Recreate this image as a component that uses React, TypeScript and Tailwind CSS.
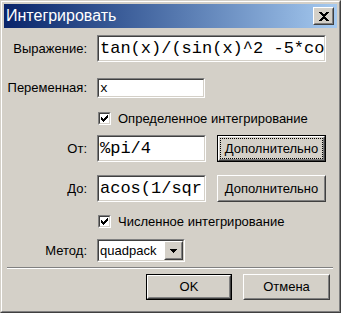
import React from 'react';

const sans = { fontFamily: '"Liberation Sans", Arial, sans-serif' };

function Sunken({ className = '', children }: { className?: string; children?: React.ReactNode }) {
  return (
    <div className={`border border-t-[#808080] border-l-[#808080] border-r-white border-b-white ${className}`}>
      <div className="h-full w-full border border-t-[#404040] border-l-[#404040] border-r-[#d4d0c8] border-b-[#d4d0c8] bg-white overflow-hidden flex items-center">
        {children}
      </div>
    </div>
  );
}

function Button({
  label,
  className = '',
  isDefault = false,
  focused = false,
}: {
  label: string;
  className?: string;
  isDefault?: boolean;
  focused?: boolean;
}) {
  if (isDefault) {
    return (
      <div className={`border border-black ${className}`}>
        <div className="h-full border border-t-white border-l-white border-r-[#404040] border-b-[#404040]">
          <div className="h-full border border-t-[#d4d0c8] border-l-[#d4d0c8] border-r-[#808080] border-b-[#808080] flex items-center justify-center">
            {focused ? (
              <div className="h-full w-full border border-dotted border-black flex items-center justify-center">
                {label}
              </div>
            ) : (
              label
            )}
          </div>
        </div>
      </div>
    );
  }
  return (
    <div className={`border border-t-white border-l-white border-r-[#404040] border-b-[#404040] ${className}`}>
      <div className="h-full border border-t-[#d4d0c8] border-l-[#d4d0c8] border-r-[#808080] border-b-[#808080] flex items-center justify-center">
        {label}
      </div>
    </div>
  );
}

function Checkbox({ label }: { label: string }) {
  // classic 7x7 check mark
  const px = [
    [6, 0],
    [5, 1], [6, 1],
    [0, 2], [4, 2], [5, 2], [6, 2],
    [0, 3], [1, 3], [3, 3], [4, 3], [5, 3],
    [0, 4], [1, 4], [2, 4], [3, 4], [4, 4],
    [1, 5], [2, 5], [3, 5],
    [2, 6],
  ];
  return (
    <div className="flex items-center ml-[94px] h-[13px]">
      <Sunken className="w-[13px] h-[13px]">
        <svg width="9" height="9" viewBox="0 0 9 9" shapeRendering="crispEdges">
          {px.map(([x, y], i) => (
            <rect key={i} x={x + 1} y={y + 1} width="1" height="1" fill="#000" />
          ))}
        </svg>
      </Sunken>
      <span className="ml-[7px] leading-none">{label}</span>
    </div>
  );
}

function Label({ text }: { text: string }) {
  return <div className="w-[83px] text-right shrink-0">{text}</div>;
}

export default function App() {
  const mono = { fontFamily: '"Liberation Mono", "Courier New", monospace' };

  return (
    <div
      className="w-[341px] h-[313px] bg-[#d4d0c8] border border-t-[#d4d0c8] border-l-[#d4d0c8] border-r-[#404040] border-b-[#404040] text-[13px] text-black"
      style={sans}
    >
      <div className="h-full border border-t-white border-l-white border-r-[#808080] border-b-[#808080] p-[2px] flex flex-col">
        {/* title bar */}
        <div className="h-[24px] shrink-0 bg-gradient-to-r from-[#0a246a] to-[#a6caf0] flex items-center pl-[2px] pr-[3px]">
          <span className="text-white text-[16px] leading-none flex-1">Интегрировать</span>
          <div className="w-[21px] h-[18px] border border-t-white border-l-white border-r-[#404040] border-b-[#404040] bg-[#d4d0c8]">
            <div className="h-full border border-t-[#d4d0c8] border-l-[#d4d0c8] border-r-[#808080] border-b-[#808080] flex items-center justify-center">
              <svg width="10" height="9" viewBox="0 0 10 9" shapeRendering="crispEdges">
                <path d="M0 0h2.5l2.5 3 2.5-3h2.5l-3.8 4.5 3.8 4.5h-2.5l-2.5-3-2.5 3h-2.5l3.8-4.5z" fill="#000" />
              </svg>
            </div>
          </div>
        </div>

        {/* body */}
        <div className="flex-1 flex flex-col">
          <div className="flex items-center mt-[7px]">
            <Label text="Выражение:" />
            <Sunken className="ml-[10px] w-[229px] h-[27px]">
              <span className="pl-[1px] whitespace-nowrap text-[17px] leading-none" style={mono}>
                tan(x)/(sin(x)^2 -5*co
              </span>
            </Sunken>
          </div>

          <div className="flex items-center mt-[16px]">
            <Label text="Переменная:" />
            <Sunken className="ml-[10px] w-[108px] h-[20px]">
              <span className="pl-[1px] text-[13px] leading-none" style={mono}>
                x
              </span>
            </Sunken>
          </div>

          <div className="mt-[14px]">
            <Checkbox label="Определенное интегрирование" />
          </div>

          <div className="flex items-center mt-[10px]">
            <Label text="От:" />
            <Sunken className="ml-[10px] w-[109px] h-[27px]">
              <span className="pl-[1px] whitespace-nowrap text-[17px] leading-none" style={mono}>
                %pi/4
              </span>
            </Sunken>
            <Button label="Дополнительно" className="ml-[11px] w-[109px] h-[27px]" isDefault focused />
          </div>

          <div className="flex items-center mt-[13px]">
            <Label text="До:" />
            <Sunken className="ml-[10px] w-[109px] h-[27px]">
              <span className="pl-[1px] whitespace-nowrap text-[17px] leading-none" style={mono}>
                acos(1/sqr
              </span>
            </Sunken>
            <Button label="Дополнительно" className="ml-[11px] w-[109px] h-[27px]" />
          </div>

          <div className="mt-[13px]">
            <Checkbox label="Численное интегрирование" />
          </div>

          <div className="flex items-center mt-[11px]">
            <Label text="Метод:" />
            <Sunken className="ml-[10px] w-[88px] h-[23px]">
              <span className="pl-[1px] flex-1 leading-none">quadpack</span>
              <div className="w-[19px] h-full border border-t-white border-l-white border-r-[#404040] border-b-[#404040] bg-[#d4d0c8]">
                <div className="h-full border border-t-[#d4d0c8] border-l-[#d4d0c8] border-r-[#808080] border-b-[#808080] flex items-center justify-center">
                  <svg width="7" height="4" viewBox="0 0 7 4" shapeRendering="crispEdges">
                    <path d="M0 0h7v1h-1v1h-1v1h-1v1h-1v-1h-1v-1h-1v-1h-1z" fill="#000" />
                  </svg>
                </div>
              </div>
            </Sunken>
          </div>

          <div className="mt-[5px] ml-[3px] mr-[4px] border-t border-t-[#808080] border-b border-b-white" />

          <div className="flex justify-end mt-[5px] pr-[7px]">
            <Button label="OK" className="w-[86px] h-[26px]" isDefault />
            <Button label="Отмена" className="ml-[11px] w-[87px] h-[26px]" />
          </div>
        </div>
      </div>
    </div>
  );
}
